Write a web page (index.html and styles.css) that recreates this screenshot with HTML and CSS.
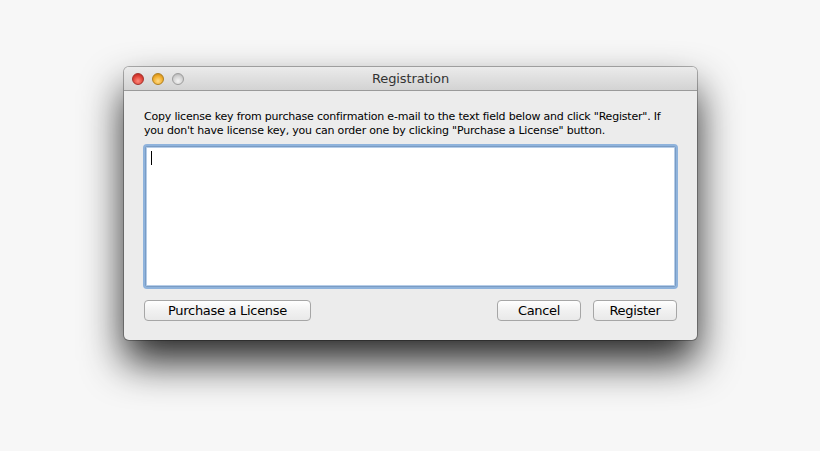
FILE: index.html
```html
<!DOCTYPE html>
<html>
<head>
<meta charset="utf-8">
<link rel="stylesheet" href="styles.css">
</head>
<body>
<div class="window">
  <div class="titlebar">
    <div class="lights">
      <span class="light red"></span>
      <span class="light yellow"></span>
      <span class="light grey"></span>
    </div>
    <div class="title">Registration</div>
  </div>
  <div class="content">
    <p class="msg">Copy license key from purchase confirmation e-mail to the text field below and click "Register". If you don't have license key, you can order one by clicking "Purchase a License" button.</p>
    <div class="field"><span class="caret"></span></div>
    <div class="buttons">
      <button class="btn purchase">Purchase a License</button>
      <div class="right">
        <button class="btn small">Cancel</button>
        <button class="btn small">Register</button>
      </div>
    </div>
  </div>
</div>
</body>
</html>
```
FILE: styles.css
```css
html, body { margin: 0; padding: 0; }
body {
  width: 820px;
  height: 451px;
  background: #f7f7f7;
  font-family: "DejaVu Sans", "Liberation Sans", sans-serif;
  padding: 67px 0 0 124px;
  box-sizing: border-box;
  overflow: hidden;
}
.window {
  width: 573px;
  height: 273px;
  border-radius: 5px;
  background: #ececec;
  box-shadow: 0 0 0 1px rgba(0,0,0,0.28), 0 22px 40px rgba(0,0,0,0.85);
  overflow: hidden;
  display: flex;
  flex-direction: column;
}
.titlebar {
  flex: none;
  background: linear-gradient(#ebebeb, #d3d3d3);
  border-bottom: 1px solid #9a9a9a;
  box-sizing: border-box;
  height: 24px;
  display: flex;
  align-items: center;
  position: relative;
}
.lights {
  display: flex;
  gap: 8px;
  padding-left: 8px;
}
.light {
  width: 12px;
  height: 12px;
  border-radius: 50%;
  box-sizing: border-box;
}
.red {
  background: radial-gradient(circle at 50% 70%, #ff8a7c 0%, #e0443a 55%, #b01d17 100%);
  border: 1px solid #a5322c;
}
.yellow {
  background: radial-gradient(circle at 50% 70%, #ffdc8a 0%, #f1ae2d 55%, #c07b0e 100%);
  border: 1px solid #b0801f;
}
.grey {
  background: radial-gradient(circle at 50% 70%, #f4f4f4 0%, #d2d2d2 55%, #a9a9a9 100%);
  border: 1px solid #9c9c9c;
}
.title {
  position: absolute;
  left: 0;
  right: 0;
  text-align: center;
  font-size: 13px;
  letter-spacing: -0.1px;
  color: #333;
  pointer-events: none;
}
.content {
  flex: 1;
  padding: 19px 19px 18px 19px;
  display: flex;
  flex-direction: column;
}
.msg {
  margin: 0 0 0 1px;
  font-size: 11px;
  line-height: 14px;
  letter-spacing: -0.2px;
  color: #000;
}
.field {
  margin-top: 8px;
  height: 141px;
  box-sizing: border-box;
  background: #fff;
  border: 1px solid #7a9cc4;
  box-shadow: 0 0 0 2px #8fb3dc, inset 0 0 0 1px #b6cde8;
  margin-left: 2px;
  margin-right: 2px;
  border-radius: 2px;
  padding: 3px 3px;
}
.caret {
  display: block;
  width: 1px;
  height: 14px;
  background: #000;
  margin-left: 2px;
  margin-top: 1px;
}
.buttons {
  margin-top: 13px;
  display: flex;
  justify-content: space-between;
  padding: 0 1px;
}
.right { display: flex; gap: 12px; }
.btn {
  height: 21px;
  box-sizing: border-box;
  font-family: "DejaVu Sans", "Liberation Sans", sans-serif;
  font-size: 13px;
  letter-spacing: -0.3px;
  color: #000;
  background: linear-gradient(#ffffff, #f1f1f1 50%, #e9e9e9);
  border: 1px solid #a6a6a6;
  border-radius: 4px;
  padding: 0;
  line-height: 19px;
}
.purchase { width: 167px; }
.small { width: 84px; }
```
